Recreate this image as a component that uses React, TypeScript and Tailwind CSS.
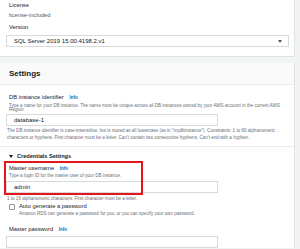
import React from "react";

const font = { fontFamily: '"Liberation Sans", Arial, sans-serif' };

const Info = () => (
  <span className="ml-[4px] text-[4.5px] font-bold text-[#0073bb]">Info</span>
);

const Input = ({ value, className = "" }: { value?: string; className?: string }) => (
  <div
    className={`h-[12px] border border-[#d5dbdb] bg-white flex items-center pl-[7px] text-[6px] text-[#16191f] ${className}`}
  >
    {value}
  </div>
);

export default function App() {
  return (
    <div
      className="w-[300px] h-[249px] overflow-hidden bg-[#f2f3f3] text-[#16191f]"
      style={font}
    >
      {/* Engine card */}
      <div className="w-[295px] h-[57px] bg-white border-r border-b border-[#e0e4e4] pl-[6px] pr-[5px]">
        <div className="h-[10px] pt-[1px] pl-[3px] text-[5.8px] leading-[8px] text-[#16191f]">License</div>
        <div className="h-[10px] pl-[3px] text-[5.8px] leading-[10px] text-[#545b64]">license-included</div>
        <div className="h-[15px] pt-[2px] pl-[3px] text-[5.8px] leading-[11px]">Version</div>
        <div className="h-[12px] border border-[#d5dbdb] bg-white flex items-center justify-between pl-[7px] pr-[6px] text-[6px]">
          <span>SQL Server 2019 15.00.4198.2.v1</span>
          <span className="w-0 h-0 border-l-[2.5px] border-r-[2.5px] border-t-[3px] border-l-transparent border-r-transparent border-t-[#545b64]" />
        </div>
      </div>

      {/* Settings card */}
      <div className="mt-[6px] w-[295px] bg-white border-r border-[#e0e4e4]">
        <div className="h-[22px] bg-[#fafafa] border-b border-[#eaeded] flex items-center pl-[9px] text-[8px] font-bold">
          Settings
        </div>
        <div className="pl-[6px] pr-[5px]">
          <div className="pt-[8px] h-[22px]">
            <div className="text-[5.8px] leading-[8px] pl-[3px]">
              DB instance identifier <Info />
            </div>
            <div className="text-[4.55px] leading-[7px] text-[#687078] pl-[3px] whitespace-nowrap">
              Type a name for your DB instance. The name must be unique across all DB instances owned by your AWS account in the current AWS
            </div>
          </div>
          <div className="text-[4.55px] leading-[7px] text-[#687078] pl-[3px] h-[7px] -mt-[1px]">Region.</div>
          <Input value="database-1" className="w-[212px] mt-[1px]" />
          <div className="mt-[1px] text-[4.55px] leading-[7px] text-[#687078] pl-[1px] whitespace-nowrap">
            The DB instance identifier is case-insensitive, but is stored as all lowercase (as in "mydbinstance"). Constraints: 1 to 60 alphanumeric
          </div>
          <div className="text-[4.55px] leading-[7px] text-[#687078] pl-[1px] whitespace-nowrap">
            characters or hyphens. First character must be a letter. Can't contain two consecutive hyphens. Can't end with a hyphen.
          </div>
        </div>
        <div className="mt-[5px] border-t border-[#eaeded]" />
        <div className="pl-[6px] pr-[5px]">
          <div className="h-[15px] pt-[3px] flex items-center text-[5.6px] font-bold pl-[3px]">
            <span className="mr-[4px] w-0 h-0 border-l-[2px] border-r-[2px] border-t-[3px] border-l-transparent border-r-transparent border-t-[#16191f]" />
            Credentials Settings
          </div>
          <div className="relative mt-[1px]">
            <div className="pl-[3px] pt-[1px]">
              <div className="text-[5.8px] leading-[8px]">
                Master username <Info />
              </div>
              <div className="text-[4.55px] leading-[6px] text-[#687078]">
                Type a login ID for the master user of your DB instance.
              </div>
            </div>
            <Input value="admin" className="w-[212px] mt-[2px]" />
            <div className="absolute left-[-2px] top-[-2px] w-[139px] h-[34px] border-[2px] border-[#e8141c]" />
          </div>
          <div className="mt-[3px] text-[4.55px] leading-[6px] text-[#687078] pl-[1px]">
            1 to 16 alphanumeric characters. First character must be a letter.
          </div>
          <div className="mt-[1px] flex items-start pl-[3px]">
            <div className="mt-[1px] w-[6px] h-[6px] border border-[#879596] rounded-[1px] bg-white" />
            <div className="ml-[4px]">
              <div className="text-[5.8px] leading-[7px]">Auto generate a password</div>
              <div className="text-[4.55px] leading-[7px] text-[#687078]">
                Amazon RDS can generate a password for you, or you can specify your own password.
              </div>
            </div>
          </div>
          <div className="mt-[8px] pl-[3px] text-[5.8px] leading-[8px]">
            Master password <Info />
          </div>
          <Input className="w-[212px] mt-[2px]" />
        </div>
      </div>
    </div>
  );
}
